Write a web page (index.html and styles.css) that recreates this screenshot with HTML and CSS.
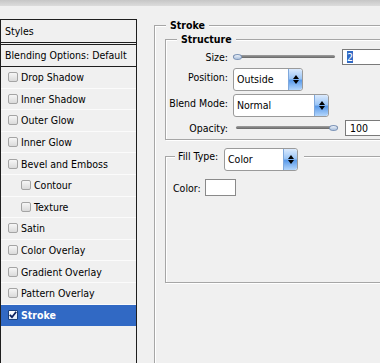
FILE: index.html
```html
<!DOCTYPE html>
<html>
<head>
<meta charset="utf-8">
<link rel="stylesheet" href="styles.css">
</head>
<body>
<div class="titlebar"></div>
<div class="main">
  <div class="styles">
    <div class="hdr">Styles</div>
    <div class="blend">Blending Options: Default</div>
    <ul class="list">
      <li class="item"><span class="cb"></span>Drop Shadow</li>
      <li class="item"><span class="cb"></span>Inner Shadow</li>
      <li class="item"><span class="cb"></span>Outer Glow</li>
      <li class="item"><span class="cb"></span>Inner Glow</li>
      <li class="item"><span class="cb"></span>Bevel and Emboss</li>
      <li class="item sub"><span class="cb"></span>Contour</li>
      <li class="item sub"><span class="cb"></span>Texture</li>
      <li class="item"><span class="cb"></span>Satin</li>
      <li class="item"><span class="cb"></span>Color Overlay</li>
      <li class="item"><span class="cb"></span>Gradient Overlay</li>
      <li class="item"><span class="cb"></span>Pattern Overlay</li>
      <li class="item sel"><span class="cb on"><svg width="8" height="8" viewBox="0 0 8 8"><path d="M0.8 3.8 L3 6.2 L7.2 0.8" fill="none" stroke="#0b1f5c" stroke-width="1.8"/></svg></span>Stroke</li>
    </ul>
  </div>
  <div class="panel">
    <fieldset class="grp outer">
      <legend class="bold">Stroke</legend>
      <fieldset class="grp structure">
        <legend class="bold st">Structure</legend>
        <div class="row r1">
          <span class="lbl">Size:</span>
          <div class="slider"><span class="thumb"></span></div>
          <div class="num"><span class="hl">2</span></div>
        </div>
        <div class="row r2">
          <span class="lbl up">Position:</span>
          <div class="select w70"><span class="val">Outside</span><span class="btn"><i class="ua"></i><i class="da"></i></span></div>
        </div>
        <div class="row r3">
          <span class="lbl up">Blend Mode:</span>
          <div class="select w96"><span class="val">Normal</span><span class="btn"><i class="ua"></i><i class="da"></i></span></div>
        </div>
        <div class="row r4">
          <span class="lbl">Opacity:</span>
          <div class="slider end"><span class="thumb"></span></div>
          <div class="num">100</div>
        </div>
      </fieldset>
      <fieldset class="grp fill">
        <legend class="ft">
          <span class="lbl2">Fill Type:</span>
          <div class="select w74"><span class="val">Color</span><span class="btn"><i class="ua"></i><i class="da"></i></span></div>
        </legend>
        <div class="color-row"><span class="clbl">Color:</span><span class="swatch"></span></div>
      </fieldset>
    </fieldset>
  </div>
</div>
</body>
</html>
```
FILE: styles.css
```css
* { box-sizing: border-box; }
html, body { margin: 0; padding: 0; }
body {
  width: 380px;
  height: 363px;
  overflow: hidden;
  background: #f0f0f0;
  font-family: "DejaVu Sans Condensed", "DejaVu Sans", sans-serif;
  font-stretch: condensed;
  font-size: 10.5px;
  color: #000;
}
.titlebar {
  height: 6px;
  background: linear-gradient(#c6c6c6, #dcdcdc);
}
.main { display: flex; height: 357px; }

.styles {
  width: 137px;
  flex: none;
  margin-top: 13px;
  border: 1px solid #1e1e1e;
  border-bottom: none;
  background: #f0f0f0;
}
.hdr {
  height: 25px;
  padding-left: 4px;
  line-height: 22px;
  border-bottom: 3px double #1e1e1e;
}
.blend {
  height: 22px;
  line-height: 21px;
  padding-left: 4px;
  white-space: nowrap;
  border-bottom: 1px solid #1e1e1e;
}
.list { list-style: none; margin: 0; padding: 0; }
.item {
  height: 21.6px;
  display: flex;
  align-items: center;
  padding-left: 7px;
  white-space: nowrap;
  border-bottom: 1px solid #fbfbfb;
}
.item.sub { padding-left: 20px; }
.cb {
  width: 10px;
  height: 10px;
  flex: none;
  margin-right: 3px;
  border: 1px solid #a4a4a4;
  border-radius: 2px;
  background: linear-gradient(#f6f6f6, #dadada);
}
.cb.on {
  background: linear-gradient(#ffffff, #dfe9f6);
  border-color: #1b3f7a;
  display: flex;
  align-items: center;
  justify-content: center;
  border-radius: 1px;
}
.item.sel {
  background: #3169c4;
  border-bottom-color: #3169c4;
  color: #fff;
  font-weight: bold;
}

.panel { flex: 1; min-width: 0; padding-left: 17px; }
.grp {
  margin: 0;
  min-width: 0;
  border: 1px solid #a6a6a6;
  box-shadow: inset 1px 1px 0 #fff, 1px 1px 0 #fff;
}
.grp > legend {
  padding: 0 4px;
  line-height: 14px;
  background: #f0f0f0;
  white-space: nowrap;
}
.bold { font-weight: bold; }
.outer {
  margin-top: 12px;
  margin-right: -60px;
  padding: 0 0 0 10px;
  height: 420px;
}
.outer > legend { margin-left: 1px; }
.structure { padding: 1px 0 2px 0; }
.structure > legend.st { margin-left: 11px; }

.row { display: flex; align-items: center; white-space: nowrap; }
.r1 { height: 19px; }
.r2 { height: 23px; margin-top: 2px; }
.r3 { height: 23px; margin-top: 3px; }
.r4 { height: 19px; margin-top: 1px; }
.lbl {
  width: 62px;
  flex: none;
  text-align: right;
  margin-right: 5px;
}
.lbl.up { margin-bottom: 5px; }

.slider {
  width: 102px;
  height: 3px;
  flex: none;
  border-radius: 2px;
  background: linear-gradient(#a0a0a0, #666);
  display: flex;
  align-items: center;
}
.slider.end { justify-content: flex-end; margin-left: 3px; }
.thumb {
  width: 9px;
  height: 6px;
  flex: none;
  border-radius: 50%;
  border: 1px solid #7d95b8;
  background: linear-gradient(#eef3fa, #a9bfdc);
}
.num {
  margin-left: 7px;
  width: 60px;
  height: 16px;
  flex: none;
  border: 1px solid #7a7a7a;
  background: #fff;
  padding-left: 4px;
  line-height: 14px;
}
.hl { background: #316ac5; color: #fff; }

.select {
  display: flex;
  height: 23px;
  flex: none;
  border: 1px solid #9a9a9a;
  border-radius: 3px;
  background: #fff;
  overflow: hidden;
}
.w70 { width: 70px; }
.w96 { width: 96px; }
.w74 { width: 74px; }
.select .val { flex: 1; padding-left: 3px; line-height: 21px; }
.select .btn {
  width: 14px;
  flex: none;
  border-left: 1px solid #7fa8dc;
  border-radius: 0 2px 2px 0;
  background: linear-gradient(#dbeafd, #9cc6f6 45%, #5b9bea 55%, #b4d6fb);
  display: flex;
  flex-direction: column;
  align-items: center;
  justify-content: center;
  gap: 1px;
}
.ua {
  border-left: 3px solid transparent;
  border-right: 3px solid transparent;
  border-bottom: 4px solid #000;
}
.da {
  border-left: 3px solid transparent;
  border-right: 3px solid transparent;
  border-top: 4px solid #000;
}

.fill {
  margin-top: 8px;
  padding: 0 0 86px 7px;
}
.grp > legend.ft {
  display: flex;
  align-items: flex-start;
  margin-left: 2px;
  padding: 0 6px 0 3px;
  line-height: 16px;
}
.lbl2 { width: 42px; flex: none; margin-right: 4px; line-height: 16px; }
.ft .select { margin-bottom: -7px; }
.color-row {
  margin-top: 15px;
  display: flex;
  align-items: center;
  height: 17px;
}
.clbl { width: 32px; }
.swatch {
  width: 31px;
  height: 17px;
  border: 1px solid #8a8a8a;
  background: #fff;
}
```
